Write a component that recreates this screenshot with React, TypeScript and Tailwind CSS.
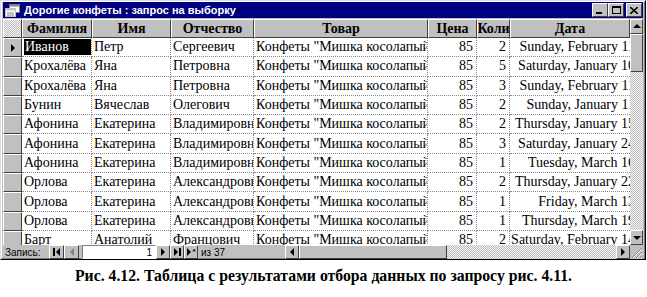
import React from "react";

const cols = [70, 79, 83, 174, 49, 33, 120];
const headers = ["Фамилия", "Имя", "Отчество", "Товар", "Цена", "Коли", "Дата"];
const rows: string[][] = [
  ["Иванов", "Петр", "Сергеевич", "2", "Sunday, February 11"],
  ["Крохалёва", "Яна", "Петровна", "5", "Saturday, January 10"],
  ["Крохалёва", "Яна", "Петровна", "3", "Sunday, February 11"],
  ["Бунин", "Вячеслав", "Олегович", "2", "Sunday, January 11"],
  ["Афонина", "Екатерина", "Владимировна", "2", "Thursday, January 15"],
  ["Афонина", "Екатерина", "Владимировна", "3", "Saturday, January 24"],
  ["Афонина", "Екатерина", "Владимировна", "1", "Tuesday, March 16"],
  ["Орлова", "Екатерина", "Александровна", "2", "Thursday, January 22"],
  ["Орлова", "Екатерина", "Александровна", "1", "Friday, March 13"],
  ["Орлова", "Екатерина", "Александровна", "1", "Thursday, March 19"],
  ["Барт", "Анатолий", "Францович", "2", "Saturday, February 14"],
];

const raised =
  "border border-t-white border-l-white border-r-[#404040] border-b-[#404040] bg-[#c0c0c0]";
const dither =
  "bg-[repeating-conic-gradient(#c0c0c0_0%_25%,#f4f4f4_0%_50%)] bg-[length:2px_2px]";

function Btn({ children, w = 14, h = 14 }: { children?: React.ReactNode; w?: number; h?: number }) {
  return (
    <div
      className={`${raised} flex items-center justify-center shrink-0`}
      style={{ width: w, height: h }}
    >
      {children}
    </div>
  );
}

function Tri({ dir, color = "#000" }: { dir: "l" | "r" | "u" | "d"; color?: string }) {
  const v = dir === "u" || dir === "d";
  const pts =
    dir === "r" ? "1,0 5,4 1,8" : dir === "l" ? "5,0 1,4 5,8" : dir === "u" ? "0,5 4,1 8,5" : "0,2 8,2 4,6";
  return (
    <svg width={v ? 8 : 6} height={8} viewBox={v ? "0 0 8 8" : "0 0 6 8"}>
      <polygon points={pts} fill={color} />
    </svg>
  );
}

export default function App() {
  const rowH = 19.3;
  return (
    <div className="w-[647px] h-[297px] bg-white overflow-hidden relative font-['Liberation_Serif',serif]">
      {/* window */}
      <div className="w-[646px] h-[260px] border border-t-[#dfdfdf] border-l-[#dfdfdf] border-r-black border-b-black bg-[#c0c0c0]">
        <div className="w-full h-full border border-t-white border-l-white border-r-[#808080] border-b-[#808080] px-[1px] flex flex-col">
          {/* title bar */}
          <div className="h-[16px] bg-[#000080] flex items-center pl-[2px] pr-[1px] shrink-0">
            <svg width="15" height="13" viewBox="0 0 15 13" className="shrink-0">
              <rect x="4.5" y="0.5" width="10" height="8" fill="#fff" stroke="#808080" />
              <rect x="4.5" y="0.5" width="10" height="2" fill="#808080" />
              <rect x="0.5" y="4.5" width="10" height="8" fill="#fff" stroke="#c0c0c0" />
              <rect x="0.5" y="4.5" width="10" height="2" fill="#c0c0c0" />
              <line x1="2" y1="9" x2="9" y2="9" stroke="#808080" />
              <line x1="2" y1="11" x2="9" y2="11" stroke="#808080" />
            </svg>
            <span className="ml-[4px] text-white font-bold text-[11px] leading-none whitespace-nowrap font-['Liberation_Sans',Arial,sans-serif]">
              Дорогие конфеты : запрос на выборку
            </span>
            <div className="ml-auto flex items-center">
              <Btn w={16} h={14}>
                <div className="w-[6px] h-[2px] bg-black mt-[6px] mr-[2px]" />
              </Btn>
              <Btn w={16} h={14}>
                <div className="w-[9px] h-[8px] border border-black border-t-2" />
              </Btn>
              <div className="w-[2px]" />
              <Btn w={16} h={14}>
                <svg width="8" height="7" viewBox="0 0 8 7">
                  <path d="M0 0 L8 7 M8 0 L0 7" stroke="#000" strokeWidth="1.6" />
                </svg>
              </Btn>
            </div>
          </div>
          <div className="h-[1px] shrink-0" />
          {/* grid area */}
          <div className="flex h-[226px] shrink-0">
            <div className="w-[627px] h-full bg-white overflow-hidden flex flex-col">
              {/* header */}
              <div className="flex h-[19px] shrink-0">
                <div className={`w-[19px] h-full ${raised} ${dither}`} />
                {headers.map((h, i) => (
                  <div
                    key={h}
                    className={`${raised} h-full flex items-center justify-center font-bold text-[14px] overflow-hidden whitespace-nowrap`}
                    style={{ width: cols[i] }}
                  >
                    {h}
                  </div>
                ))}
              </div>
              {rows.map((r, ri) => (
                <div key={ri} className="flex shrink-0 text-[14px]" style={{ height: rowH }}>
                  <div className={`w-[19px] h-full ${raised} flex items-center justify-center`}>
                    {ri === 0 && <Tri dir="r" />}
                  </div>
                  {[r[0], r[1], r[2], 'Конфеты "Мишка косолапый"', "85", r[3]].map((v, ci) => (
                    <div
                      key={ci}
                      className={`h-full border-r border-b border-dotted border-[#8a8a8a] overflow-hidden whitespace-nowrap flex items-center ${
                        ci >= 4 ? "justify-end pr-[3px]" : "pl-[2px]"
                      }`}
                      style={{ width: cols[ci] }}
                    >
                      {ri === 0 && ci === 0 ? (
                        <span className="bg-black text-white w-full h-[16px] flex items-center pl-[1px] leading-none">
                          {v}
                        </span>
                      ) : (
                        <span className="leading-none">{v}</span>
                      )}
                    </div>
                  ))}
                  <div
                    className="h-full border-b border-dotted border-[#8a8a8a] overflow-hidden whitespace-nowrap flex items-center justify-end"
                    style={{ width: cols[6] }}
                  >
                    <span className="leading-none mr-[-5px]">{r[4]}</span>
                  </div>
                </div>
              ))}
            </div>
            {/* vertical scrollbar */}
            <div className={`w-[13px] h-full flex flex-col ${dither}`}>
              <Btn w={13} h={15}>
                <Tri dir="u" />
              </Btn>
              <div className={`w-[13px] h-[38px] ${raised}`} />
              <div className="flex-1" />
              <Btn w={13} h={15}>
                <Tri dir="d" />
              </Btn>
            </div>
          </div>
          {/* nav + hscroll */}
          <div className="flex h-[14px] shrink-0 items-center">
            <div className="flex items-center h-full w-[282px] text-[10px] shrink-0 font-['Liberation_Sans',Arial,sans-serif]">
              <span className="ml-[2px] w-[44px]">Запись:</span>
              <Btn w={15} h={14}>
                <div className="flex items-center">
                  <div className="w-[2px] h-[8px] bg-black" />
                  <Tri dir="l" />
                </div>
              </Btn>
              <Btn w={15} h={14}>
                <Tri dir="l" color="#808080" />
              </Btn>
              <div className="w-[3px]" />
              <div className="h-[14px] w-[74px] bg-white border border-t-[#808080] border-l-[#808080] border-r-white border-b-white flex items-center justify-end pr-[3px]">
                1
              </div>
              <Btn w={14} h={14}>
                <Tri dir="r" />
              </Btn>
              <Btn w={14} h={14}>
                <div className="flex items-center">
                  <Tri dir="r" />
                  <div className="w-[2px] h-[8px] bg-black" />
                </div>
              </Btn>
              <Btn w={14} h={14}>
                <div className="flex items-center">
                  <Tri dir="r" />
                  <span className="text-[8px] font-bold leading-none">*</span>
                </div>
              </Btn>
              <span className="ml-[3px]">из 37</span>
            </div>
            <div className={`flex h-full w-[345px] ${dither}`}>
              <Btn w={14} h={14}>
                <Tri dir="l" />
              </Btn>
              <div className={`w-[148px] h-full ${raised}`} />
              <div className="flex-1" />
              <Btn w={14} h={14}>
                <Tri dir="r" />
              </Btn>
            </div>
            <div className="w-[13px] h-full bg-[#c0c0c0] flex items-end justify-end">
              <svg width="12" height="12" viewBox="0 0 12 12">
                <path d="M11 1 L1 11 M11 5 L5 11 M11 9 L9 11" stroke="#808080" strokeWidth="1" />
                <path d="M11 2 L2 11 M11 6 L6 11 M11 10 L10 11" stroke="#fff" strokeWidth="1" />
              </svg>
            </div>
          </div>
        </div>
      </div>
      {/* caption */}
      <div className="mt-[8px] text-center font-bold text-[15.75px] leading-none">
        Рис. 4.12. Таблица с результатами отбора данных по запросу рис. 4.11.
      </div>
    </div>
  );
}
